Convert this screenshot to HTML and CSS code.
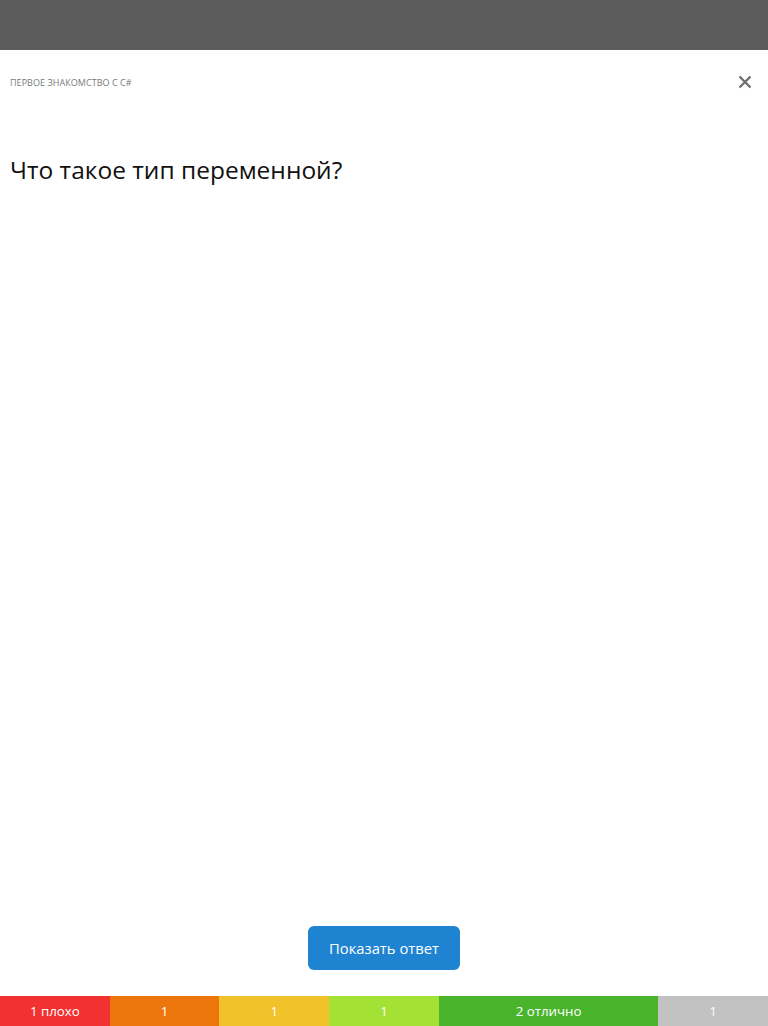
FILE: index.html
```html
<!DOCTYPE html>
<html lang="ru">
<head>
<meta charset="utf-8">
<link rel="stylesheet" href="styles.css">
</head>
<body>
<div class="page">
  <div class="topbar"></div>
  <div class="header">
    <div class="deck">ПЕРВОЕ ЗНАКОМСТВО С C#</div>
    <button class="close" aria-label="close">
      <svg width="14" height="14" viewBox="0 0 14 14"><path d="M1.5 1.5L12.5 12.5M12.5 1.5L1.5 12.5" stroke="#6f6f6f" stroke-width="2.4" stroke-linecap="butt"/></svg>
    </button>
  </div>
  <div class="question">Что такое тип переменной?</div>
  <div class="spacer"></div>
  <div class="actions">
    <button class="show">Показать ответ</button>
  </div>
  <div class="grades">
    <div class="g g1">1 плохо</div>
    <div class="g g2">1</div>
    <div class="g g3">1</div>
    <div class="g g4">1</div>
    <div class="g g5">2 отлично</div>
    <div class="g g6">1</div>
  </div>
</div>
</body>
</html>
```

FILE: styles.css
```css
html, body {
  margin: 0;
  padding: 0;
  background: #ffffff;
  font-family: "Open Sans", "Noto Sans", "Liberation Sans", sans-serif;
}
.page {
  height: 1026px;
  display: flex;
  flex-direction: column;
}
.topbar {
  height: 50px;
  background: #5c5c5c;
}
.header {
  display: flex;
  align-items: center;
  justify-content: space-between;
  padding: 22px 16px 0 10px;
  height: 20px;
}
.deck {
  font-size: 9px;
  color: #7a7a7a;
  letter-spacing: 0.05px;
}
.close {
  border: 0;
  background: none;
  padding: 0;
  width: 14px;
  height: 14px;
  display: flex;
}
.question {
  margin-top: 62px;
  padding-left: 10px;
  font-size: 24.5px;
  color: #111111;
  line-height: 32px;
}
.spacer { flex: 1; }
.actions {
  display: flex;
  justify-content: center;
  padding-bottom: 26px;
}
.show {
  width: 152px;
  height: 44px;
  border: 0;
  border-radius: 6px;
  background: #1e84d1;
  color: #ffffff;
  font-family: "Open Sans", "Noto Sans", sans-serif;
  font-size: 14.8px;
}
.grades {
  display: flex;
  height: 30px;
}
.g {
  flex: 1;
  display: flex;
  align-items: center;
  justify-content: center;
  color: #ffffff;
  font-size: 13.3px;
}
.g1 { background: #f23131; }
.g2 { background: #ed760c; }
.g3 { background: #f1c229; }
.g4 { background: #a3e234; }
.g5 { background: #4ab52c; flex: 2; }
.g6 { background: #c2c2c2; }
```
